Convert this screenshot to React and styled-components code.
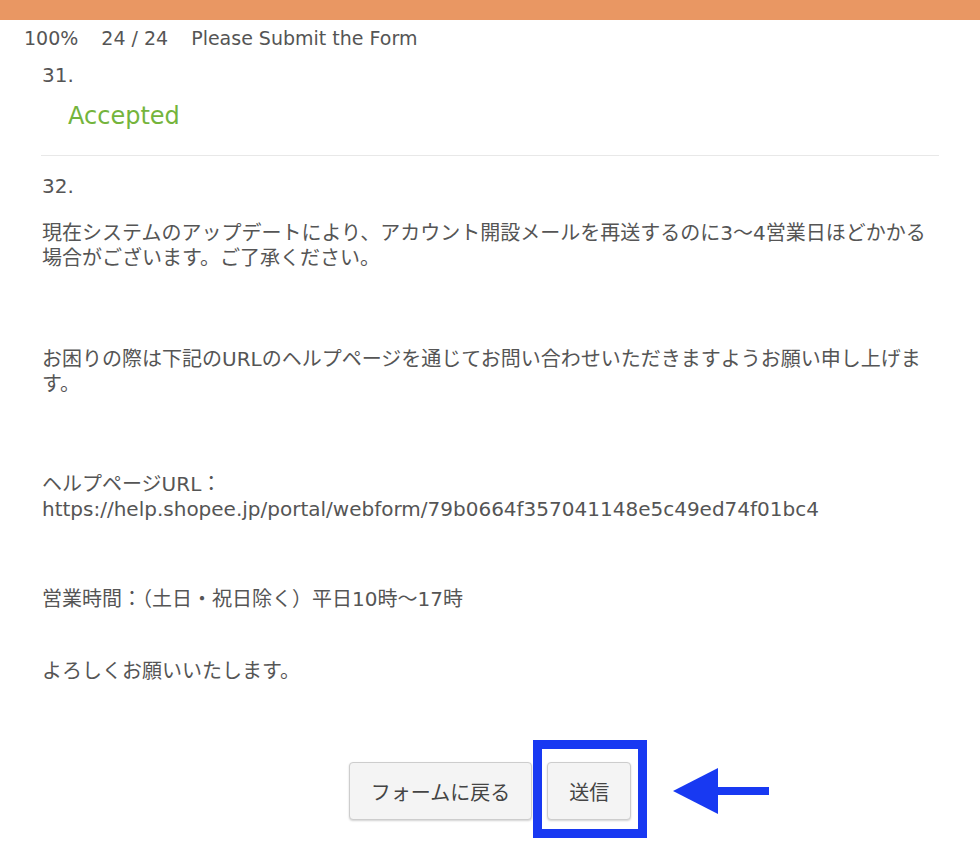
import React from "react";
import styled, { createGlobalStyle } from "styled-components";

const GlobalStyle = createGlobalStyle`
  html, body {
    margin: 0;
    padding: 0;
    background: #ffffff;
  }
  body {
    font-family: "DejaVu Sans", "Noto Sans CJK JP", sans-serif;
    color: #555555;
  }
`;

const Page = styled.div`
  width: 980px;
  min-height: 860px;
  background: #ffffff;
`;

const ProgressBar = styled.div`
  height: 20px;
  background: #e99763;
`;

const StatusLine = styled.div`
  display: flex;
  gap: 23px;
  padding: 6px 0 0 24px;
  font-size: 19px;
  line-height: 24px;
  color: #555555;
  white-space: nowrap;
`;

const StatusItem = styled.span``;

const Content = styled.div`
  padding: 0 42px;
`;

const QuestionNumber = styled.div`
  margin-top: ${(p) => p.$mt}px;
  font-size: 20px;
  line-height: 26px;
  color: #555555;
`;

const Accepted = styled.div`
  margin-top: 12px;
  padding-left: 26px;
  font-size: 24px;
  line-height: 32px;
  color: #74b43c;
`;

const Divider = styled.hr`
  margin: 23px -1px 0 -1px;
  border: 0;
  height: 1px;
  background: #e8e8e8;
`;

const Paragraph = styled.p`
  margin: ${(p) => p.$mt}px 0 0 0;
  font-size: 20px;
  line-height: 25px;
  color: #555555;
  line-break: strict;
`;

const ButtonRow = styled.div`
  margin-top: 78px;
  display: flex;
  justify-content: center;
  gap: 15px;
`;

const Button = styled.button`
  height: 58px;
  padding: 0 21px;
  font-family: "DejaVu Sans", "Noto Sans CJK JP", sans-serif;
  font-size: 20px;
  color: #444444;
  background: #f4f4f4;
  border: 1px solid #cdcdcd;
  border-radius: 4px;
  box-shadow: 0 1px 2px rgba(0, 0, 0, 0.18);
  cursor: pointer;
`;

const HighlightWrap = styled.div`
  position: relative;
  display: flex;
`;

const HighlightBox = styled.div`
  position: absolute;
  top: -22px;
  bottom: -18px;
  left: -14px;
  right: -16px;
  border: 9px solid #1839f2;
  pointer-events: none;
`;

const Arrow = styled.svg`
  position: absolute;
  left: calc(100% + 42px);
  top: 50%;
  transform: translateY(-50%);
  width: 96px;
  height: 46px;
`;

export default function App() {
  return (
    <Page>
      <GlobalStyle />
      <ProgressBar />
      <StatusLine>
        <StatusItem>100%</StatusItem>
        <StatusItem>24 / 24</StatusItem>
        <StatusItem>Please Submit the Form</StatusItem>
      </StatusLine>
      <Content>
        <QuestionNumber $mt={12}>31.</QuestionNumber>
        <Accepted>Accepted</Accepted>
        <Divider />
        <QuestionNumber $mt={17}>32.</QuestionNumber>
        <Paragraph $mt={22}>
          現在システムのアップデートにより、アカウント開設メールを再送するのに3〜4営業日ほどかかる場合がございます。ご了承ください。
        </Paragraph>
        <Paragraph $mt={76}>
          お困りの際は下記のURLのヘルプページを通じてお問い合わせいただきますようお願い申し上げます。
        </Paragraph>
        <Paragraph $mt={75}>
          ヘルプページURL：
          <br />
          https://help.shopee.jp/portal/webform/79b0664f357041148e5c49ed74f01bc4
        </Paragraph>
        <Paragraph $mt={65}>営業時間：（土日・祝日除く）平日10時〜17時</Paragraph>
        <Paragraph $mt={47}>よろしくお願いいたします。</Paragraph>
        <ButtonRow>
          <Button type="button">フォームに戻る</Button>
          <HighlightWrap>
            <Button type="button">送信</Button>
            <HighlightBox />
            <Arrow viewBox="0 0 96 46" aria-hidden="true">
              <polygon points="0,23 45,0 45,46" fill="#1839f2" />
              <rect x="44" y="19" width="52" height="8" fill="#1839f2" />
            </Arrow>
          </HighlightWrap>
        </ButtonRow>
      </Content>
    </Page>
  );
}
